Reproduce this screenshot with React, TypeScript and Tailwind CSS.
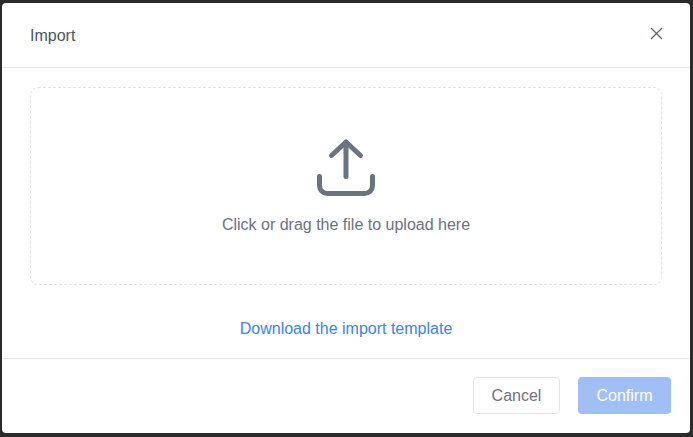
import React from "react";

export default function App() {
    return (
        <div className="h-[437px] w-[693px] bg-[#2b2b2b] pl-[2px] pr-[3px] pt-[3px] pb-[4px] font-['Liberation_Sans',Arial,sans-serif]">
            <div className="flex h-full w-full flex-col rounded-[4px] bg-white">
                <div className="flex h-[65px] items-center justify-between border-b border-[#e2e8f0] pl-[28px] pr-[27px]">
                    <span className="mt-[2px] text-[16px] text-[#4b5563]">Import</span>
                    <button type="button" aria-label="Close" className="mb-[4px] text-[#5f6672]">
                        <svg width="13" height="13" viewBox="0 0 13 13" fill="none" stroke="currentColor" strokeWidth="1.3">
                            <path d="M1 1l11 11M12 1L1 12" />
                        </svg>
                    </button>
                </div>

                <div className="flex flex-1 flex-col px-[28px] pt-[19px]">
                    <div className="flex h-[198px] flex-col items-center rounded-[8px] border border-dashed border-[#dfe3e8] pt-[50px]">
                        <svg width="60" height="60" viewBox="0 0 60 60" fill="none" stroke="#6b7280" strokeWidth="5" strokeLinecap="round" strokeLinejoin="round">
                            <path d="M30 38.5V4" />
                            <path d="M15.5 17.5L30 4l14.5 13.5" />
                            <path d="M3.5 38.5v9a8 8 0 0 0 8 8h37a8 8 0 0 0 8-8v-9" />
                        </svg>
                        <p className="mt-[16px] text-[16px] leading-[22px] text-[#6b7280]">Click or drag the file to upload here</p>
                    </div>
                    <div className="mt-[32px] text-center">
                        <a className="text-[16px] leading-[22px] text-[#3b82f6]">Download the import template</a>
                    </div>
                </div>

                <div className="flex h-[75px] items-start justify-end gap-[18px] border-t border-[#e2e8f0] pr-[19px] pt-[18px]">
                    <button type="button" className="h-[37px] w-[87px] rounded-[4px] border border-[#e2e5ea] bg-white text-[16px] text-[#6b7280]">
                        Cancel
                    </button>
                    <button type="button" className="h-[37px] w-[93px] rounded-[4px] bg-[#9fbff5] text-[16px] text-white">
                        Confirm
                    </button>
                </div>
            </div>
        </div>
    );
}
